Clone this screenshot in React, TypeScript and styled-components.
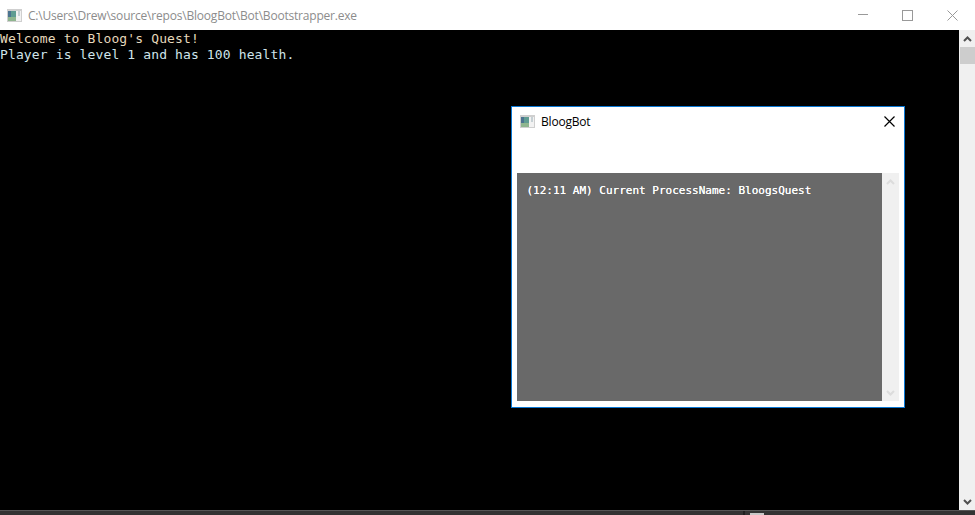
import React from "react";
import styled, { createGlobalStyle } from "styled-components";

const GlobalStyle = createGlobalStyle`
  html, body {
    margin: 0;
    padding: 0;
    background: #000;
    overflow: hidden;
  }
`;

const AppIcon = () => (
  <svg width="15" height="13" viewBox="0 0 15 13">
    <rect x="0" y="0" width="15" height="13" fill="#cfcfcf" />
    <rect x="1" y="2" width="13" height="10" fill="#f2f2f2" />
    <rect x="1" y="2" width="8" height="10" fill="#5f9c92" />
    <rect x="1" y="2" width="3" height="10" fill="#4b7390" />
    <rect x="1" y="8" width="8" height="4" fill="#8fb58f" />
    <rect x="11" y="2" width="2" height="5" fill="#c6d0d4" />
  </svg>
);

const Chevron = ({ up, color }: { up?: boolean; color: string }) => (
  <svg width="9" height="6" viewBox="0 0 9 6">
    <path
      d={up ? "M1 5 L4.5 1.5 L8 5" : "M1 1 L4.5 4.5 L8 1"}
      fill="none"
      stroke={color}
      strokeWidth="2"
    />
  </svg>
);

const App = () => (
  <Page>
    <GlobalStyle />
    <TitleBar>
      <IconSlot>
        <AppIcon />
      </IconSlot>
      <TitleText>C:\Users\Drew\source\repos\BloogBot\Bot\Bootstrapper.exe</TitleText>
      <Controls>
        <Control>
          <svg width="10" height="10" viewBox="0 0 10 10">
            <rect x="0" y="4" width="10" height="1" fill="#999" />
          </svg>
        </Control>
        <Control>
          <svg width="11" height="11" viewBox="0 0 11 11">
            <rect x="0.5" y="0.5" width="10" height="10" fill="none" stroke="#999" />
          </svg>
        </Control>
        <Control>
          <svg width="11" height="11" viewBox="0 0 11 11">
            <path d="M0.5 0.5 L10.5 10.5 M10.5 0.5 L0.5 10.5" stroke="#999" fill="none" />
          </svg>
        </Control>
      </Controls>
    </TitleBar>
    <ConsoleRow>
      <ConsoleText>
        <WelcomeLine>Welcome to Bloog's Quest!</WelcomeLine>
        <PlayerLine>Player is level 1 and has 100 health.</PlayerLine>
      </ConsoleText>
      <ConsoleScroll>
        <ArrowCell>
          <Chevron up color="#505050" />
        </ArrowCell>
        <ConsoleThumb />
        <ScrollSpace />
        <ArrowCell>
          <Chevron color="#505050" />
        </ArrowCell>
      </ConsoleScroll>
    </ConsoleRow>
    <Taskbar>
      <TaskDivider />
      <TaskMark />
    </Taskbar>

    <BotWindow>
      <BotTitle>
        <AppIcon />
        <BotName>BloogBot</BotName>
        <BotClose>
          <svg width="11" height="11" viewBox="0 0 11 11">
            <path d="M0.5 0.5 L10.5 10.5 M10.5 0.5 L0.5 10.5" stroke="#000" strokeWidth="1.2" fill="none" />
          </svg>
        </BotClose>
      </BotTitle>
      <LogArea>
        <LogPanel>(12:11 AM) Current ProcessName: BloogsQuest</LogPanel>
        <LogScroll>
          <ArrowCell>
            <Chevron up color="#dcdcdc" />
          </ArrowCell>
          <ArrowCell>
            <Chevron color="#dcdcdc" />
          </ArrowCell>
        </LogScroll>
      </LogArea>
    </BotWindow>
  </Page>
);

const Page = styled.div`
  position: relative;
  width: 975px;
  height: 515px;
  display: flex;
  flex-direction: column;
  overflow: hidden;
  background: #000;
`;

const TitleBar = styled.div`
  height: 30px;
  display: flex;
  align-items: center;
  background: #fff;
`;

const IconSlot = styled.div`
  display: flex;
  margin-left: 7px;
`;

const TitleText = styled.div`
  margin-left: 6px;
  font-family: "Open Sans", sans-serif;
  font-size: 12px;
  color: #8c8c8c;
  letter-spacing: -0.2px;
  white-space: nowrap;
`;

const Controls = styled.div`
  margin-left: auto;
  display: flex;
`;

const Control = styled.div`
  width: 45px;
  height: 29px;
  display: flex;
  align-items: center;
  justify-content: center;
`;

const ConsoleRow = styled.div`
  flex: 1;
  display: flex;
  min-height: 0;
`;

const ConsoleText = styled.div`
  flex: 1;
  font-family: "DejaVu Sans Mono", monospace;
  font-size: 13px;
  letter-spacing: 0.13px;
  line-height: 16px;
  padding-top: 1px;
  white-space: pre;
`;

const WelcomeLine = styled.div`
  color: #e6d9bc;
`;

const PlayerLine = styled.div`
  color: #cfe4ea;
`;

const ConsoleScroll = styled.div`
  width: 16px;
  display: flex;
  flex-direction: column;
  background: #f0f0f0;
`;

const ArrowCell = styled.div`
  height: 17px;
  display: flex;
  align-items: center;
  justify-content: center;
`;

const ConsoleThumb = styled.div`
  height: 17px;
  margin-left: 1px;
  background: #cdcdcd;
`;

const ScrollSpace = styled.div`
  flex: 1;
`;

const Taskbar = styled.div`
  position: relative;
  height: 5px;
  background: #333;
  border-top: 1px solid #555;
  box-sizing: border-box;
`;

const TaskDivider = styled.div`
  position: absolute;
  left: 743px;
  top: 0;
  width: 2px;
  height: 4px;
  background: #1f1f1f;
`;

const TaskMark = styled.div`
  position: absolute;
  left: 750px;
  top: 2px;
  width: 14px;
  height: 2px;
  background: #c8c8c8;
`;

const BotWindow = styled.div`
  position: absolute;
  left: 511px;
  top: 106px;
  width: 394px;
  height: 302px;
  box-sizing: border-box;
  border: 1px solid #0a78d4;
  background: #fff;
  display: flex;
  flex-direction: column;
  padding: 0 5px 6px;
`;

const BotTitle = styled.div`
  position: relative;
  height: 29px;
  display: flex;
  align-items: center;
  padding-left: 3px;
`;

const BotName = styled.div`
  margin-left: 6px;
  font-family: "Open Sans", sans-serif;
  font-size: 12px;
  color: #000;
  letter-spacing: -0.2px;
`;

const BotClose = styled.div`
  position: absolute;
  right: 4px;
  top: 9px;
  display: flex;
`;

const LogArea = styled.div`
  margin-top: 37px;
  flex: 1;
  display: flex;
  min-height: 0;
`;

const LogPanel = styled.div`
  flex: 1;
  background: #696969;
  color: #fff;
  font-family: "DejaVu Sans Mono", monospace;
  font-size: 11px;
  line-height: 14px;
  padding: 11px 9.5px;
  text-shadow: 0 0 0.6px #fff;
  white-space: pre;
`;

const LogScroll = styled.div`
  width: 17px;
  display: flex;
  flex-direction: column;
  justify-content: space-between;
  background: #f0f0f0;
`;

export default App;
